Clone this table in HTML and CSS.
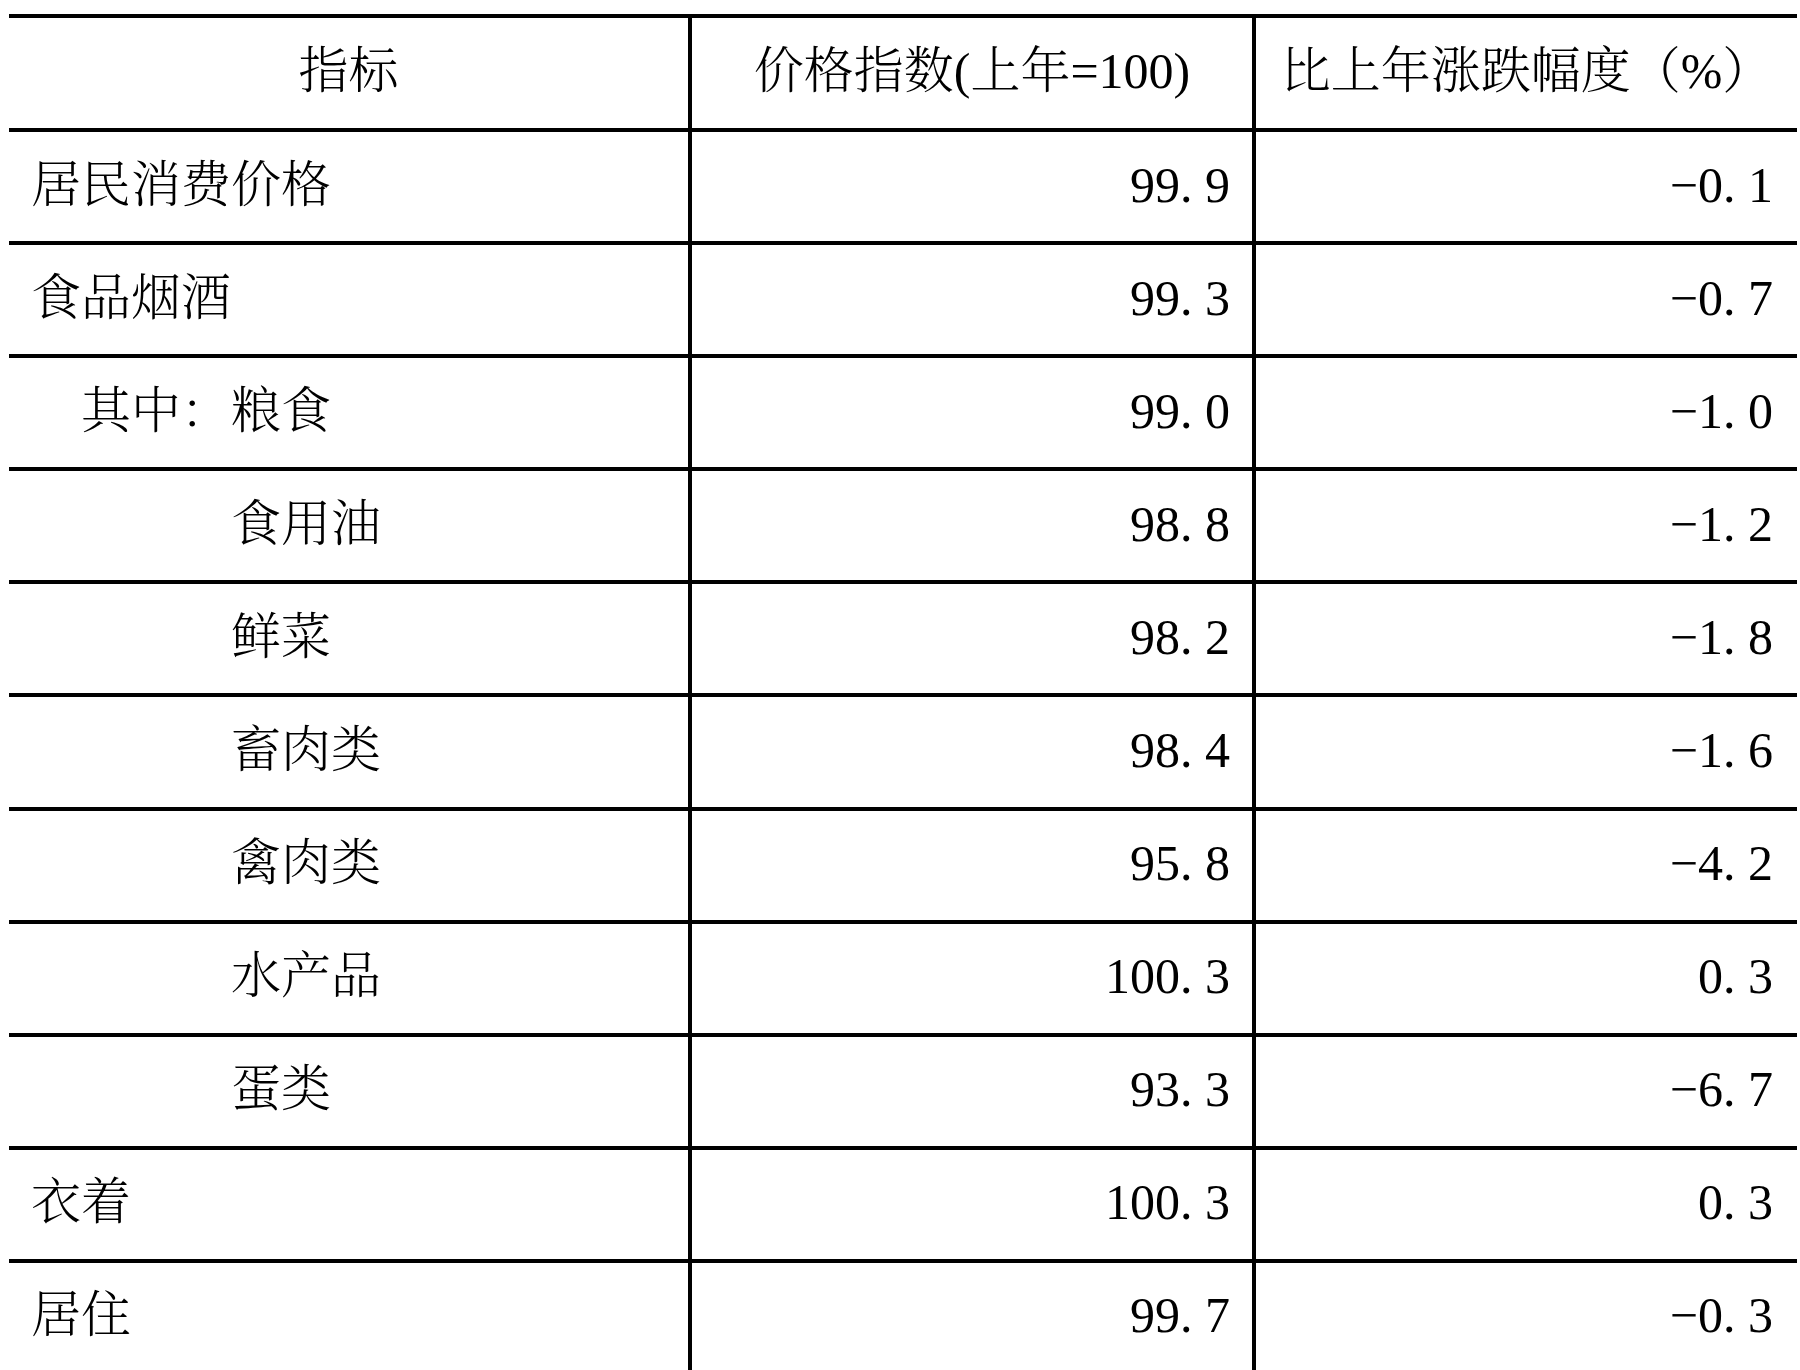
FILE: index.html
```html
<!DOCTYPE html>
<html lang="zh-CN">
<head>
<meta charset="utf-8">
<title>居民消费价格指数</title>
<link rel="stylesheet" href="styles.css">
</head>
<body>
<table class="cpi">
  <colgroup>
    <col class="c1">
    <col class="c2">
    <col class="c3">
  </colgroup>
  <thead>
    <tr class="head">
      <th>指标</th>
      <th>价格指数(上年=100)</th>
      <th>比上年涨跌幅度（%）</th>
    </tr>
  </thead>
  <tbody>
    <tr><td class="name">居民消费价格</td><td class="num">99<span class="pt">.</span>9</td><td class="num last">−0<span class="pt">.</span>1</td></tr>
    <tr><td class="name">食品烟酒</td><td class="num">99<span class="pt">.</span>3</td><td class="num last">−0<span class="pt">.</span>7</td></tr>
    <tr><td class="name l1">其中：粮食</td><td class="num">99<span class="pt">.</span>0</td><td class="num last">−1<span class="pt">.</span>0</td></tr>
    <tr><td class="name l2">食用油</td><td class="num">98<span class="pt">.</span>8</td><td class="num last">−1<span class="pt">.</span>2</td></tr>
    <tr><td class="name l2">鲜菜</td><td class="num">98<span class="pt">.</span>2</td><td class="num last">−1<span class="pt">.</span>8</td></tr>
    <tr><td class="name l2">畜肉类</td><td class="num">98<span class="pt">.</span>4</td><td class="num last">−1<span class="pt">.</span>6</td></tr>
    <tr><td class="name l2">禽肉类</td><td class="num">95<span class="pt">.</span>8</td><td class="num last">−4<span class="pt">.</span>2</td></tr>
    <tr><td class="name l2">水产品</td><td class="num">100<span class="pt">.</span>3</td><td class="num last">0<span class="pt">.</span>3</td></tr>
    <tr><td class="name l2">蛋类</td><td class="num">93<span class="pt">.</span>3</td><td class="num last">−6<span class="pt">.</span>7</td></tr>
    <tr><td class="name">衣着</td><td class="num">100<span class="pt">.</span>3</td><td class="num last">0<span class="pt">.</span>3</td></tr>
    <tr><td class="name">居住</td><td class="num">99<span class="pt">.</span>7</td><td class="num last">−0<span class="pt">.</span>3</td></tr>
  </tbody>
</table>
</body>
</html>
```
FILE: styles.css
```css
html, body {
  margin: 0;
  background: #ffffff;
}

body {
  padding: 14px 3px 0 9px;
}

.cpi {
  border-collapse: separate;
  border-spacing: 0;
  table-layout: fixed;
  width: 1788px;
  font-family: "Liberation Serif", "Noto Serif CJK SC", "Noto Sans CJK SC", serif;
  font-size: 50px;
  font-weight: 300;
  color: #000000;
}

.c1 { width: 679px; }
.c2 { width: 564px; }
.c3 { width: 545px; }

.cpi th,
.cpi td {
  box-sizing: border-box;
  padding: 0 0 4px 0;
  border-bottom: 4px solid #000000;
  vertical-align: middle;
  white-space: nowrap;
  line-height: 1;
}

.cpi th + th,
.cpi td + td {
  border-left: 4px solid #000000;
}

.cpi th {
  height: 118px;
  border-top: 4px solid #000000;
  font-weight: 300;
  text-align: center;
}

.cpi td {
  height: 113.1px;
}

.cpi .name {
  text-align: left;
  padding-left: 22px;
}

.cpi .name.l1 { padding-left: 72px; }
.cpi .name.l2 { padding-left: 222px; }

.cpi .num {
  text-align: right;
  padding-right: 22px;
}

.cpi .num.last {
  padding-right: 24px;
}

.pt {
  display: inline-block;
  width: 0.5em;
  text-align: left;
}
```
